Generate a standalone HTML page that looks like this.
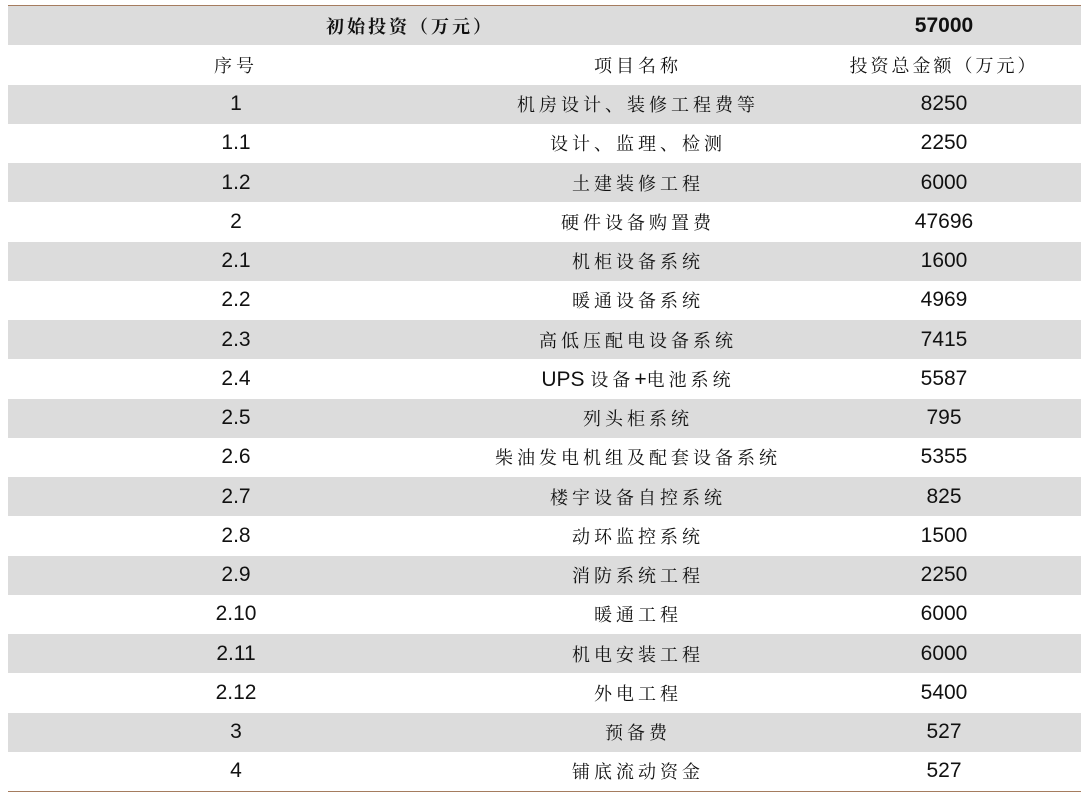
<!DOCTYPE html>
<html><head><meta charset="utf-8"><style>
html,body{margin:0;padding:0;background:#fff;width:1081px;height:793px;overflow:hidden}
table{position:absolute;left:8px;top:5px;width:1073px;border-collapse:collapse;border-top:1.5px solid #a57c5f;border-bottom:1.5px solid #a57c5f}
td{height:39.25px;padding:0;text-align:center;font-family:"Liberation Sans",sans-serif;font-size:21px;color:#111}
tr:nth-child(odd) td{background:#dcdcdc}
.c{font-family:"Liberation Serif","Noto Serif CJK SC",serif;font-size:18px;letter-spacing:4px}
.b{font-weight:bold}
</style></head><body>
<table>
<colgroup><col style="width:456px"><col style="width:348px"><col style="width:264px"><col></colgroup>
<tr><td colspan="2" class="c b" style="letter-spacing:3px">初始投资（万元）</td><td class="b">57000</td><td></td></tr>
<tr><td class="c">序号</td><td class="c">项目名称</td><td class="c" style="letter-spacing:3px">投资总金额（万元）</td><td></td></tr>
<tr><td>1</td><td class="c">机房设计、装修工程费等</td><td>8250</td><td></td></tr>
<tr><td>1.1</td><td class="c">设计、监理、检测</td><td>2250</td><td></td></tr>
<tr><td>1.2</td><td class="c">土建装修工程</td><td>6000</td><td></td></tr>
<tr><td>2</td><td class="c">硬件设备购置费</td><td>47696</td><td></td></tr>
<tr><td>2.1</td><td class="c">机柜设备系统</td><td>1600</td><td></td></tr>
<tr><td>2.2</td><td class="c">暖通设备系统</td><td>4969</td><td></td></tr>
<tr><td>2.3</td><td class="c">高低压配电设备系统</td><td>7415</td><td></td></tr>
<tr><td>2.4</td><td class="c"><span style="font-family:'Liberation Sans',sans-serif;font-size:21px;letter-spacing:0">UPS </span>设备<span style="font-family:'Liberation Sans',sans-serif;font-size:21px;letter-spacing:0">+</span>电池系统</td><td>5587</td><td></td></tr>
<tr><td>2.5</td><td class="c">列头柜系统</td><td>795</td><td></td></tr>
<tr><td>2.6</td><td class="c">柴油发电机组及配套设备系统</td><td>5355</td><td></td></tr>
<tr><td>2.7</td><td class="c">楼宇设备自控系统</td><td>825</td><td></td></tr>
<tr><td>2.8</td><td class="c">动环监控系统</td><td>1500</td><td></td></tr>
<tr><td>2.9</td><td class="c">消防系统工程</td><td>2250</td><td></td></tr>
<tr><td>2.10</td><td class="c">暖通工程</td><td>6000</td><td></td></tr>
<tr><td>2.11</td><td class="c">机电安装工程</td><td>6000</td><td></td></tr>
<tr><td>2.12</td><td class="c">外电工程</td><td>5400</td><td></td></tr>
<tr><td>3</td><td class="c">预备费</td><td>527</td><td></td></tr>
<tr><td>4</td><td class="c">铺底流动资金</td><td>527</td><td></td></tr>
</table>
</body></html>
